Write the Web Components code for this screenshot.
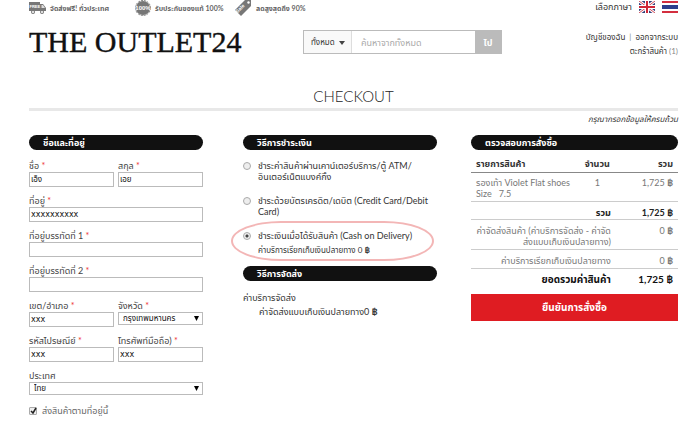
<!DOCTYPE html>
<html lang="th">
<head>
<meta charset="utf-8">
<title>The Outlet24 - Checkout</title>
<style>
body {
  margin: 0;
  background: #fff;
  color: #444;
  font-family: Lato, "Noto Sans Thai", "Noto Sans", "Liberation Sans", sans-serif;
  font-size: 9px;
  line-height: 11px;
}
</style>
</head>
<body>
<outlet-page></outlet-page>

<script>
class PromoBar extends HTMLElement {
  constructor() {
    super();
    this.attachShadow({ mode: "open" });
    this.shadowRoot.innerHTML = `
    <style>
      :host { display: flex; justify-content: space-between; height: 16px; color: #666; }
      ul { display: grid; grid-template-columns: 106px 100px auto; margin: 0; padding: 0; list-style: none; font-size: 7px; font-weight: bold; }
      li { display: flex; align-items: center; gap: 4px; height: 16px; white-space: nowrap; }
      svg { display: block; flex: none; }
      nav { display: flex; align-items: center; gap: 7px; height: 13px; color: #333; }
      a { display: block; }
    </style>
    <ul>
      <li>
        <svg width="17" height="16" viewBox="0 0 17 16"><g fill="#777"><path d="M0 2h11v9H0zM11 4h3l3 4v3h-6z"/><circle cx="4" cy="12" r="2"/><circle cx="13" cy="12" r="2"/></g><path d="M12.500 5h1.500l2 3h-3.500z" fill="#ddd"/><g fill="#fff"><circle cx="4" cy="12" r="1"/><circle cx="13" cy="12" r="1"/></g><text x="0.500" y="8" font-family="Liberation Sans" font-size="4" font-weight="bold" fill="#fff">FREE</text></svg>
        จัดส่งฟรี! ทั่วประเทศ
      </li>
      <li>
        <svg width="16" height="16" viewBox="0 0 16 16"><circle cx="8" cy="8" r="7" fill="#777"/><circle cx="8" cy="8" r="7.500" fill="none" stroke="#777" stroke-dasharray="2 1"/><text x="8" y="10" text-anchor="middle" font-family="Liberation Sans" font-size="6" font-weight="bold" fill="#fff">100%</text></svg>
        รับประกันของแท้ 100%
      </li>
      <li>
        <svg width="17" height="16" viewBox="0 0 17 16"><path d="M0 10 10 0h6v6L6 16z" fill="#777"/><circle cx="13.500" cy="2.500" r="1.200" fill="#fff"/><text x="2" y="12" transform="rotate(-45 4 12)" font-family="Liberation Sans" font-size="5" font-weight="bold" fill="#fff">Sale</text></svg>
        ลดสูงสุดถึง 90%
      </li>
    </ul>
    <nav>
      <span>เลือกภาษา</span>
      <a href="#en" aria-label="English"><svg width="16" height="12" viewBox="0 0 16 12"><path fill="#34427c" d="M0 0h16v12H0z"/><path d="m0 0 16 12M16 0 0 12" stroke="#fff" stroke-width="3"/><path d="m0 0 16 12M16 0 0 12" stroke="#d24b58"/><path d="M8 0v12M0 6h16" stroke="#fff" stroke-width="4"/><path d="M8 0v12M0 6h16" stroke="#cf2738" stroke-width="2"/></svg></a>
      <a href="#th" aria-label="ไทย"><svg width="16" height="12" viewBox="0 0 16 12"><path fill="#d32f3f" d="M0 0h16v12H0z"/><path fill="#fff" d="M0 2h16v8H0z"/><path fill="#2e3f8c" d="M0 4h16v4H0z"/></svg></a>
    </nav>`;
  }
}
customElements.define("promo-bar", PromoBar);

class StoreHeader extends HTMLElement {
  constructor() {
    super();
    this.attachShadow({ mode: "open" });
    this.shadowRoot.innerHTML = `
    <style>
      :host { display: grid; grid-template-columns: 274fr 199fr 176fr; margin-top: 14px; height: 56px; }
      .logo { font: 30px/24px "Liberation Serif", serif; color: #111; text-decoration: none; white-space: nowrap; -webkit-text-stroke: 0.4px #111; }
      form { display: flex; min-width: 0; height: 24px; box-sizing: border-box; border: 1px solid #bbb; }
      select, input, button { font: inherit; border: 0; margin: 0; border-radius: 0; min-width: 0; }
      .scope { position: relative; display: flex; width: 47px; border-right: 1px solid #ddd; background: #f9f9f9; }
      .scope svg { position: absolute; right: 6px; top: 10px; pointer-events: none; }
      select { appearance: none; width: 100%; padding: 0 0 0 7px; background: none; color: #333; font-size: 8px; }
      input { flex: 1; width: 0; padding: 0 9px; outline: 0; }
      input::placeholder { color: #aaa; }
      button { width: 26px; padding: 0; background: #bbb; color: #fff; font-weight: bold; }
      nav { text-align: right; line-height: 14px; color: #888; font-size: 8px; }
      nav a { color: #333; text-decoration: none; }
      .bar { padding: 0 2px; }
    </style>
    <a class="logo" href="#">THE OUTLET24</a>
    <form>
      <span class="scope">
        <select aria-label="หมวดหมู่"><option>ทั้งหมด</option></select>
        <svg width="6" height="4"><path d="M0 0h6L3 4z" fill="#444"/></svg>
      </span>
      <input type="text" aria-label="ค้นหา" placeholder="ค้นหาจากทั้งหมด">
      <button type="button">ไป</button>
    </form>
    <nav>
      <div><a href="#account">บัญชีของฉัน</a> <span class="bar">|</span> <a href="#logout">ออกจากระบบ</a></div>
      <div><a href="#cart">ตะกร้าสินค้า</a> (1)</div>
    </nav>`;
  }
}
customElements.define("store-header", StoreHeader);

class PillHeading extends HTMLElement {
  constructor() {
    super();
    this.attachShadow({ mode: "open" });
    this.shadowRoot.innerHTML = `
    <style>
      :host { display: block; }
      h2 { margin: 0; padding: 0 14px; height: 15px; border-radius: 8px; background: #111; color: #fff; font-size: 9px; line-height: 15px; white-space: nowrap; }
    </style>
    <h2><slot></slot></h2>`;
  }
}
customElements.define("pill-heading", PillHeading);

// <form-field label value required type="select">
class FormField extends HTMLElement {
  constructor() {
    super();
    this.attachShadow({ mode: "open" });
    const label = this.getAttribute("label");
    const value = this.getAttribute("value") || "";
    const star = this.hasAttribute("required") ? ' <i>*</i>' : '';
    const control = this.getAttribute("type") === "select"
      ? `<span class="select"><select id="control"><option>${value}</option></select><svg width="5" height="5"><path d="M0 0h5L2.5 5z" fill="#000"/></svg></span>`
      : `<input id="control" type="text" value="${value}">`;
    this.shadowRoot.innerHTML = `
    <style>
      :host { display: block; height: 27px; min-width: 0; }
      label { display: block; height: 12px; line-height: 12px; white-space: nowrap; }
      i { color: #e33; font-style: normal; }
      input, select { display: block; box-sizing: border-box; width: 100%; margin: 0; border: 1px solid #bbb; border-radius: 0; background: #fff; color: #111; font: inherit; }
      input { height: 15px; padding: 0 1px; font-family: "DejaVu Sans", "Noto Sans Thai", sans-serif; font-size: 8px; }
      select { appearance: none; height: 13px; padding: 0 4px; font-size: 8px; line-height: 11px; }
      .select { position: relative; display: block; }
      svg { position: absolute; right: 4px; top: 4px; pointer-events: none; }
    </style>
    <label for="control">${label}${star}</label>
    ${control}`;
  }
}
customElements.define("form-field", FormField);

class AddressForm extends HTMLElement {
  constructor() {
    super();
    this.attachShadow({ mode: "open" });
    this.shadowRoot.innerHTML = `
    <style>
      :host { display: block; }
      .fields { display: grid; grid-template-columns: 1fr 1fr; gap: 8px 4px; margin-top: 10px; }
      .wide { grid-column: span 2; }
      .same { display: flex; align-items: center; gap: 5px; margin-top: 8px; color: #666; }
      input { appearance: none; width: 8px; height: 8px; margin: 0; border: 1px solid #aaa; border-radius: 1px; box-sizing: border-box; background: #eee; }
      .tick { position: relative; display: flex; }
      .tick svg { position: absolute; left: 0; top: 0; pointer-events: none; }
    </style>
    <pill-heading>ชื่อและที่อยู่</pill-heading>
    <div class="fields">
      <form-field label="ชื่อ" value="เอ็ง" required></form-field>
      <form-field label="สกุล" value="เอย" required></form-field>
      <form-field class="wide" label="ที่อยู่" value="xxxxxxxxxx" required></form-field>
      <form-field class="wide" label="ที่อยู่บรรทัดที่ 1" required></form-field>
      <form-field class="wide" label="ที่อยู่บรรทัดที่ 2" required></form-field>
      <form-field label="เขต/อำเภอ" value="xxx" required></form-field>
      <form-field label="จังหวัด" value="กรุงเทพมหานคร" type="select" required></form-field>
      <form-field label="รหัสไปรษณีย์" value="xxx" required></form-field>
      <form-field label="โทรศัพท์มือถือ)" value="xxx" required></form-field>
      <form-field class="wide" label="ประเทศ" value="ไทย" type="select"></form-field>
    </div>
    <label class="same">
      <span class="tick"><input type="checkbox" checked><svg width="8" height="8"><path d="m2 4 2 2 3-5" fill="none" stroke="#222" stroke-width="1.5"/></svg></span>
      ส่งสินค้าตามที่อยู่นี้
    </label>`;
  }
}
customElements.define("address-form", AddressForm);

class PaymentOptions extends HTMLElement {
  constructor() {
    super();
    this.attachShadow({ mode: "open" });
    this.shadowRoot.innerHTML = `
    <style>
      :host { display: block; padding-left: 6px; }
      .options { display: grid; gap: 13px; margin: 10px 0; }
      .option { position: relative; display: grid; grid-template-columns: 8px 1fr; column-gap: 7px; color: #333; }
      input { appearance: none; width: 8px; height: 8px; margin: 2px 0 0; border: 1px solid #aaa; border-radius: 50%; box-sizing: border-box; background: #eee; }
      input:checked { background: radial-gradient(circle, #444 0 1px, #eee 2px); }
      .fee { display: block; margin-top: 4px; font-size: 8px; }
      .ring { position: absolute; left: -12px; right: 3px; top: -9px; height: 40px; box-sizing: border-box; border: 2px solid #f3b6b6; border-radius: 50px / 20px; pointer-events: none; }
      dl { margin: 11px 0 0; color: #333; }
      dd { margin: 3px 0 0 16px; }
    </style>
    <pill-heading>วิธีการชำระเงิน</pill-heading>
    <div class="options">
      <div class="option">
        <input type="radio" name="pay" id="counter">
        <label for="counter">ชำระค่าสินค้าผ่านเคาน์เตอร์บริการ/ตู้ ATM/<br>อินเตอร์เน็ตแบงค์กิ้ง</label>
      </div>
      <div class="option">
        <input type="radio" name="pay" id="card">
        <label for="card">ชำระด้วยบัตรเครดิต/เดบิต (Credit Card/Debit<br>Card)</label>
      </div>
      <div class="option">
        <input type="radio" name="pay" id="cod" checked>
        <label for="cod">ชำระเงินเมื่อได้รับสินค้า (Cash on Delivery)<span class="fee">ค่าบริการเรียกเก็บเงินปลายทาง 0 <b>฿</b></span></label>
        <span class="ring"></span>
      </div>
    </div>
    <pill-heading>วิธีการจัดส่ง</pill-heading>
    <dl>
      <dt>ค่าบริการจัดส่ง</dt>
      <dd>ค่าจัดส่งแบบเก็บเงินปลายทาง0 <b>฿</b></dd>
    </dl>`;
  }
}
customElements.define("payment-options", PaymentOptions);

class OrderSummary extends HTMLElement {
  constructor() {
    super();
    this.attachShadow({ mode: "open" });
    this.shadowRoot.innerHTML = `
    <style>
      :host { display: block; }
      table { width: 100%; margin-top: 5px; border-collapse: collapse; table-layout: fixed; color: #777; }
      th, td { padding: 3px 5px; text-align: right; vertical-align: top; border-bottom: 1px solid #ccc; font-weight: normal; }
      thead th { color: #333; font-weight: bold; border-color: #888; }
      th.item, td.item { padding-right: 0; text-align: left; }
      .count { text-align: center; }
      .product > * { padding-top: 4px; padding-bottom: 2px; }
      .sub > * { padding: 5px 5px 1px; color: #222; font-weight: bold; }
      .fees > * { padding: 5px 5px 2px; }
      .total > * { padding: 5px 5px 4px; border: 0; color: #111; font-weight: bold; font-size: 10px; }
      button { display: block; width: 100%; height: 27px; margin-top: 5px; padding: 0; border: 0; background: #df1c22; color: #fff; font: inherit; font-size: 10px; font-weight: bold; }
    </style>
    <pill-heading>ตรวจสอบการสั่งซื้อ</pill-heading>
    <table>
      <colgroup><col style="width: 52%"><col style="width: 18%"><col></colgroup>
      <thead><tr><th class="item">รายการสินค้า</th><th class="count">จำนวน</th><th>รวม</th></tr></thead>
      <tbody>
        <tr class="product"><td class="item">รองเท้า Violet Flat shoes<br>Size &nbsp; 7.5</td><td class="count">1</td><td>1,725 <b>฿</b></td></tr>
        <tr class="sub"><th colspan="2">รวม</th><td>1,725 ฿</td></tr>
        <tr class="fees"><th colspan="2">ค่าจัดส่งสินค้า (ค่าบริการจัดส่ง - ค่าจัด<br>ส่งแบบเก็บเงินปลายทาง)</th><td>0 <b>฿</b></td></tr>
        <tr class="fees"><th colspan="2">ค่าบริการเรียกเก็บเงินปลายทาง</th><td>0 <b>฿</b></td></tr>
        <tr class="total"><th colspan="2">ยอดรวมค่าสินค้า</th><td>1,725 ฿</td></tr>
      </tbody>
    </table>
    <button type="button">ยืนยันการสั่งซื้อ</button>`;
  }
}
customElements.define("order-summary", OrderSummary);

class OutletPage extends HTMLElement {
  constructor() {
    super();
    this.attachShadow({ mode: "open" });
    this.shadowRoot.innerHTML = `
    <style>
      :host { display: block; padding: 0 22px 0 29px; }
      h1 { margin: 0; padding: 0 0 2px; border-bottom: 3px solid #e8e8e8; color: #222; font-size: 15px; font-weight: 300; line-height: 20px; text-align: center; }
      .note { margin: 3px 0 10px; color: #333; font-size: 8px; font-style: italic; text-align: right; }
      main { display: grid; grid-template-columns: 174fr 200fr 207fr; column-gap: 34px; align-items: start; }
      main > * { min-width: 0; }
    </style>
    <promo-bar></promo-bar>
    <store-header></store-header>
    <h1>CHECKOUT</h1>
    <p class="note">กรุณากรอกข้อมูลให้ครบถ้วน</p>
    <main>
      <address-form></address-form>
      <payment-options></payment-options>
      <order-summary></order-summary>
    </main>`;
  }
}
customElements.define("outlet-page", OutletPage);
</script>
</body>
</html>
